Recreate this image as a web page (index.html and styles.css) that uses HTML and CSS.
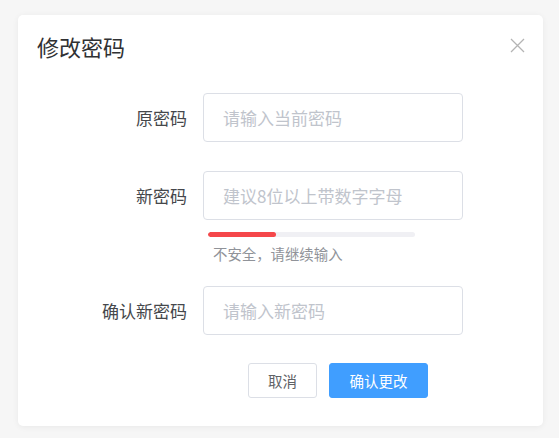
FILE: index.html
```html
<!DOCTYPE html>
<html lang="zh">
<head>
<meta charset="utf-8">
<link rel="stylesheet" href="styles.css">
</head>
<body>
<div class="dialog">
  <div class="dialog-header">
    <span class="dialog-title">修改密码</span>
    <button class="close" aria-label="关闭">
      <svg width="15" height="15" viewBox="0 0 15 15"><path d="M1 1L14 14M14 1L1 14" stroke="#b4b4b4" stroke-width="1.3" fill="none"/></svg>
    </button>
  </div>
  <div class="dialog-body">
    <div class="form-row row-1">
      <label class="label">原密码</label>
      <input class="input" type="password" placeholder="请输入当前密码">
    </div>
    <div class="form-row row-2">
      <label class="label">新密码</label>
      <input class="input" type="password" placeholder="建议8位以上带数字字母">
    </div>
    <div class="strength">
      <div class="strength-track"><div class="strength-fill" style="width:33%"></div></div>
      <div class="strength-hint">不安全，请继续输入</div>
    </div>
    <div class="form-row row-3">
      <label class="label">确认新密码</label>
      <input class="input" type="password" placeholder="请输入新密码">
    </div>
    <div class="footer">
      <button class="btn btn-default">取消</button>
      <button class="btn btn-primary">确认更改</button>
    </div>
  </div>
</div>
</body>
</html>
```
FILE: styles.css
```css
html, body {
  margin: 0;
  padding: 0;
}
body {
  background: #f6f6f6;
  font-family: "Noto Sans CJK SC", "Noto Sans", sans-serif;
  width: 559px;
  height: 438px;
  overflow: hidden;
  padding-top: 15px;
  box-sizing: border-box;
}
.dialog {
  position: relative;
  margin-left: 18px;
  width: 525px;
  height: 411px;
  background: #fff;
  border-radius: 5px;
  box-shadow: 0 1px 6px rgba(0,0,0,0.06);
  box-sizing: border-box;
}
.dialog-header {
  height: 60px;
  padding: 16px 0 0 19px;
  box-sizing: border-box;
}
.dialog-title {
  font-size: 22px;
  line-height: 30px;
  color: #303133;
}
.close {
  position: absolute;
  top: 23px;
  right: 18px;
  width: 15px;
  height: 15px;
  padding: 0;
  border: 0;
  background: none;
  display: flex;
}
.dialog-body {
  padding-top: 18px;
}
.form-row {
  display: flex;
  align-items: center;
}
.row-2 { margin-top: 29px; }
.row-3 { margin-top: 23px; }
.label {
  width: 185px;
  padding-right: 16px;
  box-sizing: border-box;
  text-align: right;
  font-size: 17px;
  color: #45474b;
}
.input {
  width: 260px;
  height: 49px;
  box-sizing: border-box;
  border: 1px solid #dcdfe6;
  border-radius: 4px;
  padding: 0 0 0 19px;
  font-family: inherit;
  font-size: 17px;
  color: #606266;
  outline: none;
}
.input::placeholder {
  color: #c0c4cc;
}
.strength {
  margin-left: 190px;
  padding-top: 12px;
}
.strength-track {
  width: 207px;
  height: 5px;
  border-radius: 3px;
  background: #f0f0f4;
  overflow: hidden;
}
.strength-fill {
  height: 100%;
  background: #f5474a;
  border-radius: 3px;
}
.strength-hint {
  margin: 8px 0 0 5px;
  font-size: 14.4px;
  line-height: 18px;
  color: #909399;
}
.footer {
  display: flex;
  gap: 12px;
  margin: 28px 0 0 230px;
}
.btn {
  height: 35px;
  box-sizing: border-box;
  border-radius: 3px;
  font-family: inherit;
  font-size: 14.5px;
  padding: 0;
}
.btn-default {
  width: 69px;
  border: 1px solid #dcdfe6;
  background: #fff;
  color: #606266;
}
.btn-primary {
  width: 99px;
  border: 1px solid #409eff;
  background: #409eff;
  color: #fff;
}
```
